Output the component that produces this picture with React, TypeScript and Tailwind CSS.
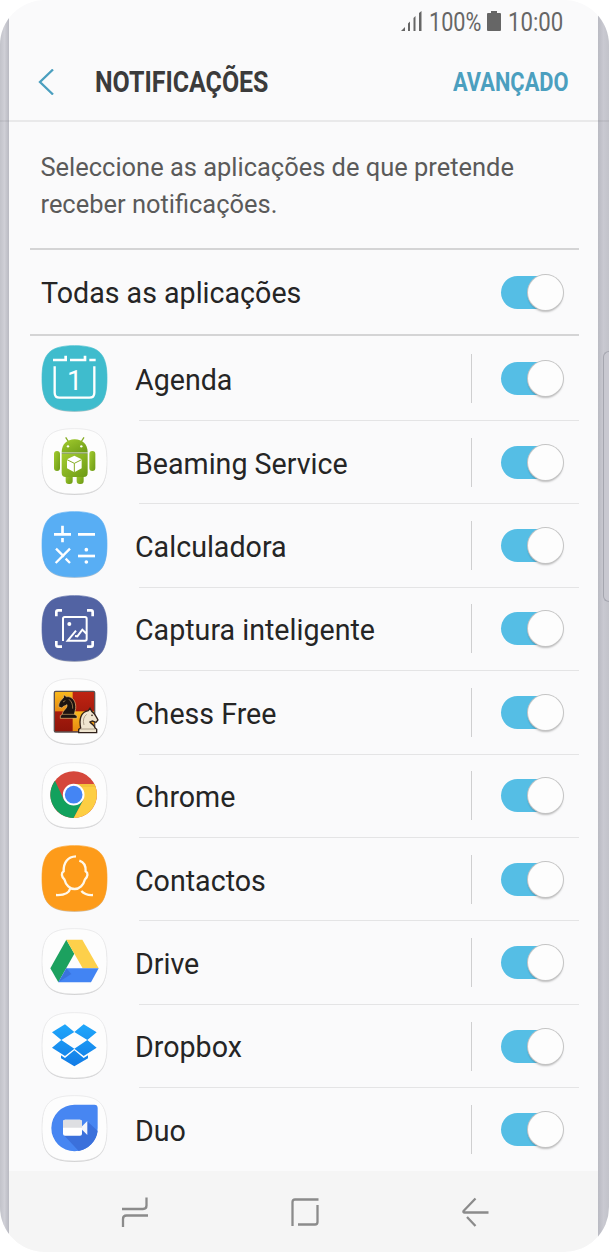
import type { ReactNode } from "react";

type App = {
  name: string;
  color: string;
  icon: ReactNode;
};

const WHITE_TILE = "#fdfdfd";

const apps: App[] = [
  {
    name: "Agenda",
    color: "#3fbccd",
    icon: (
      <g stroke="#fff" fill="none">
        <path d="M36 45H74V32M87 45H132V32M145 45H164" strokeWidth="8" />
        <path d="M41 64V143Q41 158 56 158H145Q160 158 160 143V64" strokeWidth="7" />
        <text
          x="101"
          y="134"
          textAnchor="middle"
          fontFamily="Roboto, sans-serif"
          fontSize="82"
          fill="#fff"
          strokeWidth="0"
        >
          1
        </text>
      </g>
    ),
  },
  {
    name: "Beaming Service",
    color: WHITE_TILE,
    icon: (
      <g>
        <defs>
          <linearGradient id="droid" x1="0" x2="1" y1="0" y2="1">
            <stop offset="0" stopColor="#a3cc2e" />
            <stop offset="1" stopColor="#6c9a16" />
          </linearGradient>
        </defs>
        <path d="M74 28L83 42M129 28L120 42" stroke="#86ad25" strokeWidth="4" />
        <g fill="url(#droid)">
          <path d="M62 73C62 49 78 34 101 34S140 49 140 73Z" />
          <rect x="39" y="69" width="18" height="60" rx="9" />
          <rect x="145" y="69" width="18" height="60" rx="9" />
          <rect x="74" y="130" width="21" height="38" rx="9" />
          <rect x="107" y="130" width="21" height="38" rx="9" />
          <path d="M62 78H140V134Q140 147 128 147H74Q62 147 62 134Z" />
        </g>
        <path d="M62 75.500H140" stroke="#587d14" strokeWidth="3" />
        <circle cx="81" cy="55" r="3.5" fill="#fff" />
        <circle cx="121" cy="55" r="3.5" fill="#fff" />
        <path d="M100 83L122 94V121L100 133L78 121V94Z" fill="#fff" />
        <path d="M78 95L100 106L122 95M100 106V133" fill="none" stroke="#86ad25" strokeWidth="3" />
      </g>
    ),
  },
  {
    name: "Calculadora",
    color: "#58aef4",
    icon: (
      <g stroke="#fff" strokeWidth="8" fill="none">
        <path d="M39 70H90M64.500 44V74M64.500 81V94M111 70H162" />
        <path d="M87 113L44 156M45 113L69 137M74 143L87 156" strokeWidth="7" />
        <path d="M111 135H162" />
        <circle cx="136" cy="116" r="5.500" fill="#fff" stroke="none" />
        <circle cx="136" cy="153" r="5.500" fill="#fff" stroke="none" />
      </g>
    ),
  },
  {
    name: "Captura inteligente",
    color: "#5263a3",
    icon: (
      <g stroke="#fff" fill="none">
        <path
          d="M46 64V51Q46 46 51 46H63M138 46H150Q155 46 155 51V64M155 138V150Q155 155 150 155H138M63 155H51Q46 155 46 150V138"
          strokeWidth="8"
        />
        <path
          d="M66 138V71Q66 66 71 66H132Q137 66 137 71V132Q137 137 132 137H80L105 107M102 123L109 124L124 104L137 117"
          strokeWidth="6"
        />
        <circle cx="85" cy="87" r="6" fill="#fff" stroke="none" />
      </g>
    ),
  },
  {
    name: "Chess Free",
    color: WHITE_TILE,
    icon: (
      <g>
        <defs>
          <linearGradient id="chessRed" x1="0" x2="0" y1="0" y2="1">
            <stop offset="0" stopColor="#c02412" />
            <stop offset="1" stopColor="#8f1409" />
          </linearGradient>
          <linearGradient id="chessGold" x1="0" x2="0" y1="0" y2="1">
            <stop offset="0" stopColor="#f9b81c" />
            <stop offset="1" stopColor="#e88a12" />
          </linearGradient>
        </defs>
        <rect x="40" y="40" width="121" height="122" rx="4" fill="url(#chessRed)" />
        <path d="M42 42H95V100H42Z" fill="url(#chessGold)" />
        <path d="M95 100H159V160H95Z" fill="url(#chessGold)" />
        <rect x="40" y="40" width="121" height="122" rx="4" fill="none" stroke="#5c5150" strokeWidth="4" />
        <path
          d="M64 109C64 97 80 92 78 80C72 84 66 84 62 90L53 86C52 74 60 66 67 60L69 50L76 56C96 54 106 72 104 92L100 109L108 113V121H58V113Z"
          fill="#1c1310"
          stroke="#eec27a"
          strokeWidth="2"
        />
        <path d="M64 109H101M66 72L73 68M84 64Q96 74 95 92" stroke="#c9a063" strokeWidth="2" fill="none" />
        <path
          d="M119 150C114 126 118 102 142 98L147 91L152 100C161 105 166 117 171 126L165 133L154 129L147 132C153 140 162 143 162 150L167 154V164H113V154Z"
          fill="#efe5d0"
          stroke="#30211a"
          strokeWidth="4"
        />
        <path d="M118 153H162M129 141Q123 120 137 109" stroke="#8c7b66" strokeWidth="2" fill="none" />
        <circle cx="153" cy="112" r="2.500" fill="#30211a" />
      </g>
    ),
  },
  {
    name: "Chrome",
    color: WHITE_TILE,
    icon: (
      <g>
        <circle cx="98" cy="98" r="70" fill="#d5473b" />
        <path d="M42 56L69 114L98 130L127 114L98 168A70 70 0 0 1 42 56Z" fill="#12a15d" />
        <path d="M160 66H98L127 98V114L98 168A70 70 0 0 0 160 66Z" fill="#fdce43" />
        <path d="M98 66H160L164 75H122Z" fill="#e9b733" opacity=".5" />
        <circle cx="98" cy="98" r="32.500" fill="#fff" />
        <circle cx="98" cy="98" r="26.500" fill="#4485f4" />
      </g>
    ),
  },
  {
    name: "Contactos",
    color: "#fd9b1a",
    icon: (
      <g stroke="#fff8ea" strokeWidth="7" fill="none">
        <path d="M105 34C80 35 67 53 68 79C60 84 61 95 70 103C74 120 87 132 101 132C115 132 128 120 132 103C141 95 142 84 134 79C135 62 130 52 115 47" />
        <path d="M45 150C65 151 84 146 88 130M121 138C130 148 140 151 156 150" />
      </g>
    ),
  },
  {
    name: "Drive",
    color: WHITE_TILE,
    icon: (
      <g>
        <path d="M76 35L100 77L52 163L28 121Z" fill="#1ca15f" />
        <path d="M76 35H124L173 121H125Z" fill="#fdd04b" />
        <path d="M76 121H173L150 163H52Z" fill="#4284f3" />
        <path d="M76 121L91 138L52 163Z" fill="#3468cf" opacity=".6" />
      </g>
    ),
  },
  {
    name: "Dropbox",
    color: WHITE_TILE,
    icon: (
      <g>
        <defs>
          <linearGradient id="box" x1="0" x2="0" y1="37" y2="163" gradientUnits="userSpaceOnUse">
            <stop offset="0" stopColor="#1fa7fb" />
            <stop offset="1" stopColor="#127be6" />
          </linearGradient>
        </defs>
        <path
          d="M72 37L100 60L61 84L33 61ZM128 37L167 61L139 84L100 60ZM61 84L100 110L72 132L33 107ZM139 84L167 107L128 132L100 110ZM60 130L72 138L100 115L128 138L141 130V139L100 163L60 139Z"
          fill="url(#box)"
        />
      </g>
    ),
  },
  {
    name: "Duo",
    color: WHITE_TILE,
    icon: (
      <g>
        <path d="M101 29H160Q170 29 170 39V99A69.500 70 0 1 1 101 29Z" fill="#4786f2" />
        <path d="M139 79L170 108A70 70 0 0 1 113 168L69 121L123 110Z" fill="#3b70db" />
        <path d="M139 78V120L118 99Z" fill="#f4f6fb" />
        <rect x="66" y="74" width="57" height="48" rx="6" fill="#fff" />
        <path d="M66 98V80Q66 74 72 74H117Q123 74 123 80V98Z" fill="#dedfe2" />
      </g>
    ),
  },
];

function AppIcon({ color, children }: { color: string; children: ReactNode }) {
  return (
    <svg viewBox="0 0 201 201" className="size-[67px] shrink-0 overflow-visible">
      <path
        d="M100.500 5C175 5 198 29 198 103S175 201 100.500 201S3 177 3 103S26 5 100.500 5Z"
        fill="#000"
        opacity=".18"
      />
      <path
        d="M100.500 2C175 2 198 26 198 100S175 198 100.500 198S3 174 3 100S26 2 100.500 2Z"
        fill={color}
        stroke={color === WHITE_TILE ? "#e3e3e4" : color}
        strokeWidth="2"
      />
      {children}
    </svg>
  );
}

function Toggle() {
  return (
    <div className="flex h-[33px] w-[62px] shrink-0 items-center justify-end rounded-full bg-linear-to-r from-[#55bee5] from-80% to-transparent to-80%">
      <div className="size-[35px] shrink-0 rounded-full bg-[#fdfdfd] shadow-[0_0_0_1px_#c4c4c4,0_2px_2px_rgba(0,0,0,0.25)]" />
    </div>
  );
}

function StatusBar() {
  return (
    <div className="flex h-[43px] items-center pl-[392px] text-[25.500px] text-[#666]">
      <svg viewBox="0 0 21 20" className="mr-[7px] mb-0.5 h-5 w-[21px] shrink-0" fill="#666">
        <path d="M0 20L4 16V20ZM7 12.500L9 10.500V20H7ZM12.500 7L14.500 5V20H12.500ZM18 2L20.500 0V20H18Z" />
      </svg>
      <span className="mt-0.5 w-[52px] shrink-0 origin-left scale-x-[.85]">100%</span>
      <svg viewBox="0 0 14 20" className="mr-[7px] mb-0.5 ml-[6px] h-5 w-3.5 shrink-0" fill="#666">
        <path d="M4 0H10V2H13Q14 2 14 3V19Q14 20 13 20H1Q0 20 0 19V3Q0 2 1 2H4Z" />
      </svg>
      <span className="mt-0.5 w-[54px] shrink-0 origin-left scale-x-[.87]">10:00</span>
    </div>
  );
}

function Header() {
  return (
    <header className="flex h-[79px] items-center border-b-2 border-[#e9e9ea] pl-[29px] font-bold">
      <svg viewBox="0 0 16 26" className="h-[26px] w-4 shrink-0" fill="none" stroke="#4b9fbf" strokeWidth="2.300">
        <path d="M15 0.500L2 13L15 25.500" />
      </svg>
      <h1 className="mt-[3px] ml-[41px] w-[358px] shrink-0 origin-left scale-x-[.86] text-[29px] text-[#3b3b3b]">
        NOTIFICAÇÕES
      </h1>
      <button className="mt-0.5 w-[115px] shrink-0 origin-left scale-x-[.84] text-left text-[26px] text-[#4b9fbf]">
        AVANÇADO
      </button>
    </header>
  );
}

function NavBar() {
  return (
    <nav className="flex h-[81px] shrink-0 items-center bg-[#f5f5f5] pl-[112px]">
      <svg viewBox="0 0 28 30" className="h-[30px] w-7" fill="none" stroke="#8b8b8b" strokeWidth="2.300">
        <path d="M1 12H22Q25.500 12 25.500 8.500V0.500M27 18.500H5.500Q2 18.500 2 22V30" />
      </svg>
      <svg viewBox="0 0 28 28" className="ml-[142px] size-7" fill="none" stroke="#8b8b8b" strokeWidth="2.300">
        <path d="M27.500 1.500H4Q1.500 1.500 1.500 4V28M7 26.500H24Q26.500 26.500 26.500 24V7" />
      </svg>
      <svg viewBox="0 0 27 30" className="ml-[143px] h-[30px] w-[27px]" fill="none" stroke="#8b8b8b" strokeWidth="2.300">
        <path d="M13.500 1.500L1.500 14Q1 15.500 2.500 15.500H26.500M5 20L13.500 29" />
      </svg>
    </nav>
  );
}

export default function App() {
  return (
    <div className="flex h-[1252px] w-[609px] overflow-hidden rounded-[45px] bg-[#fafafb] font-[Roboto,sans-serif]">
      <div className="w-[9px] shrink-0 bg-linear-to-r from-[#c2c3ca] via-[#cfcfd6] to-[#b9bac2] pt-[120px]">
        <div className="h-0.5 bg-black/5" />
      </div>

      <main className="flex w-[589px] shrink-0 flex-col overflow-hidden">
        <StatusBar />
        <Header />
        <section className="ml-[21px] w-[549px]">
          <p className="h-[126px] pt-[27px] pl-[10.500px] text-[25.440px] leading-[37px] whitespace-nowrap text-[#5a5a5a]">
            Seleccione as aplicações de que pretende
            <br />
            receber notificações.
          </p>
          <div className="flex h-[88px] items-center justify-between border-y-2 border-[#d4d4d5] pr-4 pl-[10.500px]">
            <span className="origin-left scale-x-[.97] pt-0.5 text-[29.500px] text-[#252525]">Todas as aplicações</span>
            <Toggle />
          </div>
          <ul className="pt-[1.500px]">
            {apps.map((app) => (
              <li key={app.name} className="group flex h-[83.430px] pl-[11px]">
                <div className="pt-[7px]">
                  <AppIcon color={app.color}>{app.icon}</AppIcon>
                </div>
                <div className="ml-[31px] flex flex-1 items-center border-b border-[#e4e4e5] pr-4 group-last:border-transparent">
                  <span className="-ml-1 flex-1 origin-left scale-x-[.97] pt-[3px] text-[29.500px] whitespace-nowrap text-[#252525]">
                    {app.name}
                  </span>
                  <div className="mr-[29px] h-[49px] w-px bg-[#cfcfd0]" />
                  <Toggle />
                </div>
              </li>
            ))}
          </ul>
        </section>
        <div className="-mt-1.5 flex flex-1 flex-col justify-end">
          <NavBar />
        </div>
      </main>

      <div className="flex w-[11px] shrink-0 flex-col items-end bg-linear-to-r from-[#b9bac2] via-[#c9c9d1] to-[#c2c3ca] pt-[120px]">
        <div className="h-0.5 w-full bg-black/5" />
        <div className="mt-[229px] h-[251px] w-1.5 rounded-l-lg border border-r-0 border-[#a5a6af] bg-[#c8c8d0]" />
      </div>
    </div>
  );
}
